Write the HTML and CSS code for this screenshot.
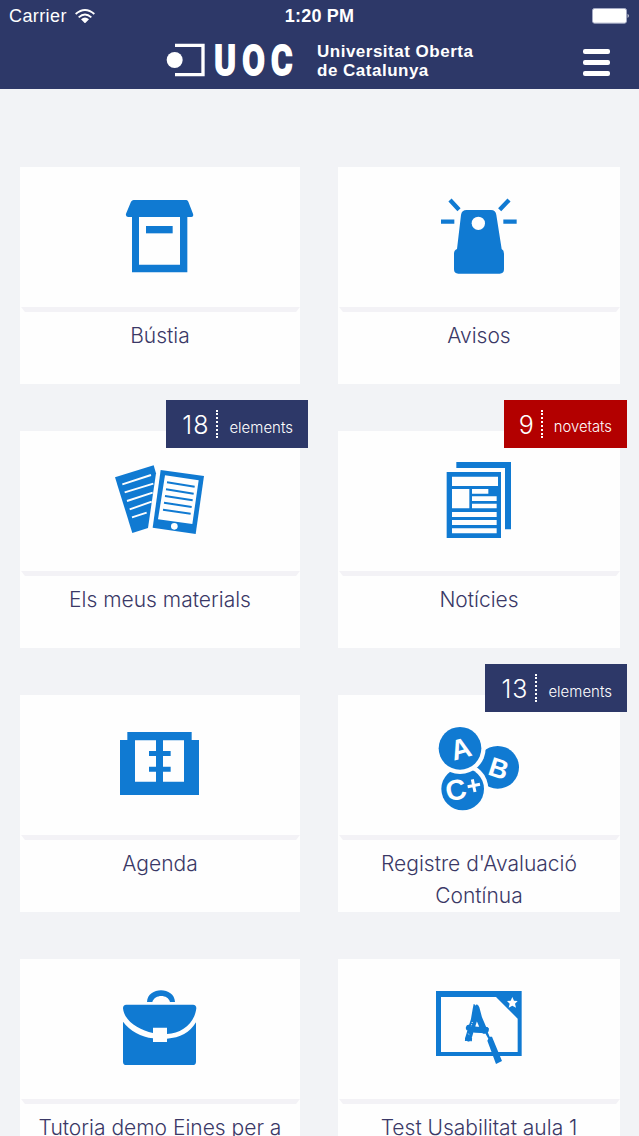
FILE: index.html
```html
<!DOCTYPE html>
<html lang="ca">
<head>
    <meta charset="UTF-8">
    <meta name="viewport" content="width=device-width, initial-scale=1.0">
    <title>UOC</title>
    <link rel="stylesheet" href="styles.css">
</head>
<body>

<header class="header">
    <div class="status-bar">
        <div class="carrier">
            <span>Carrier</span>
            <svg class="wifi" viewBox="0 0 60 42" width="20" height="14">
                <path d="M2 15 Q30 -9 58 15 M11 25 Q30 8 49 25" fill="none" stroke="#fff" stroke-width="5.5"/>
                <path d="M18 31 Q30 20 42 31 L30 43 Z" fill="#fff"/>
            </svg>
        </div>
        <div class="time">1:20 PM</div>
        <svg class="battery" viewBox="0 0 114 48" width="38" height="16">
            <rect x="1.5" y="1.5" width="102" height="44" rx="6" fill="#fff" stroke="#a4aac4" stroke-width="3"/>
            <path d="M107 17 Q113 23 107 30 Z" fill="#fff"/>
        </svg>
    </div>
    <div class="brand-bar">
        <svg class="logo" viewBox="498 96 390 168" width="130" height="56">
            <path d="M525 136 H609 V224 H525" fill="none" stroke="#fff" stroke-width="10"/>
            <circle cx="524" cy="180" r="24" fill="#fff"/>
            <text class="logo-text" transform="translate(643 224) scale(0.78 1)">UOC</text>
        </svg>
        <div class="brand-name">Universitat Oberta<br>de Catalunya</div>
        <button class="menu-btn" aria-label="Menú">
            <span></span>
            <span></span>
            <span></span>
        </button>
    </div>
</header>

<main class="cards-container">
    <div class="card">
        <svg class="card-icon" viewBox="270 36 360 420">
            <path d="M371 135 H529 Q533 135 535 140 L549 176 Q552 186 544 186 H532 V352 H366 V186 H354 Q346 186 348 176 L363 140 Q366 135 371 135 Z M387 186 V329 H510 V186 Z" fill-rule="evenodd"/>
            <path d="M408 213 H488 V235 H408 Z"/>
        </svg>
        <div class="card-line"></div>
        <div class="card-title">Bústia</div>
    </div>

    <div class="card">
        <svg class="card-icon" viewBox="267 36 360 420">
            <path d="M410 165 H483 Q497 165 499 180 L515 282 Q522 286 522 296 V343 Q522 356 509 356 H385 Q372 356 372 343 V296 Q372 286 381 282 L393 180 Q395 165 410 165 Z"/>
            <circle class="paper" cx="445" cy="205" r="20"/>
            <path class="stroke" d="M333 200 H373 M520 200 H560 M360 135 L387 164 M537 135 L509 164" stroke-width="13"/>
        </svg>
        <div class="card-line"></div>
        <div class="card-title">Avisos</div>
    </div>

    <div class="card">
        <div class="badge"><span class="badge-number">18</span><span class="badge-text">elements</span></div>
        <svg class="card-icon" viewBox="270 108 360 420">
            <path d="M315 247 L431 211 L438 235 L414 399 L367 414 Z"/>
            <path class="paper-stroke" d="M337 268 L423 240 M344 292 L430 266 M351 318 L428 293 M359 343 L425 320 M366 367 L410 353" stroke-width="6"/>
            <path d="M452 225 L582 243 L557 417 L428 398 Z"/>
            <path class="paper" d="M465 241 L566 256 L547 387 L444 373 Z"/>
            <path class="stroke" d="M471 262 L554 275 M468 283 L551 296 M465 303 L548 316 M462 323 L545 336 M459 344 L542 356" stroke-width="6"/>
            <circle class="paper" cx="493" cy="394" r="10"/>
        </svg>
        <div class="card-line"></div>
        <div class="card-title">Els meus materials</div>
    </div>

    <div class="card">
        <div class="badge badge-new"><span class="badge-number">9</span><span class="badge-text">novetats</span></div>
        <svg class="card-icon" viewBox="267 108 360 420">
            <path d="M379 201 H543 V403 H525 V219 H379 Z"/>
            <path d="M350 231 H513 V429 H350 Z"/>
            <path class="paper" d="M366 245 H504 V273 H366 Z M366 282 H418 V340 H366 Z M426 282 H475 V296 H426 Z M426 304 H500 V318 H426 Z M426 326 H500 V340 H426 Z M366 351 H500 V366 H366 Z M366 375 H500 V390 H366 Z M366 400 H500 V415 H366 Z"/>
        </svg>
        <div class="card-line"></div>
        <div class="card-title">Notícies</div>
    </div>

    <div class="card">
        <svg class="card-icon" viewBox="270 15 360 420">
            <path d="M352 126 H545 V150 H567 V315 H330 V150 H352 Z"/>
            <path class="paper" d="M375 151 H438 V183 H417 V198 H438 V230 H417 V245 H438 V275 H375 Z M459 151 H522 V275 H459 V245 H482 V230 H459 V198 H482 V183 H459 Z"/>
        </svg>
        <div class="card-line"></div>
        <div class="card-title">Agenda</div>
    </div>

    <div class="card">
        <div class="badge"><span class="badge-number">13</span><span class="badge-text">elements</span></div>
        <svg class="card-icon" viewBox="267 120 360 420">
            <circle cx="503" cy="337" r="64"/>
            <circle class="paper" cx="398" cy="402" r="77"/>
            <circle cx="398" cy="402" r="64"/>
            <circle class="paper" cx="390" cy="280" r="77"/>
            <circle cx="390" cy="280" r="64"/>
            <g class="grade">
                <text transform="translate(371 317) rotate(-16)" font-size="84">A</text>
                <text transform="translate(470 358) rotate(18)" font-size="80">B</text>
                <text transform="translate(353 440) rotate(-12)" font-size="86">C</text>
            </g>
            <path class="paper-stroke" d="M413 395 L450 388 M427 373 L435 411" stroke-width="9"/>
        </svg>
        <div class="card-line"></div>
        <div class="card-title">Registre d'Avaluació Contínua</div>
    </div>

    <div class="card">
        <svg class="card-icon" viewBox="270 27 360 420">
            <path d="M411 156 C413 109 493 109 495 156 H480 C474 132 434 132 427 156 Z"/>
            <path d="M349 164 H549 Q559 164 559 175 C554 220 515 250 471 252 V233 H429 V249 C386 240 342 212 339 175 Q339 164 349 164 Z"/>
            <path d="M339 215 C359 243 394 261 429 265 V276 H471 V266 C510 264 540 247 558 217 V335 Q558 345 548 345 H349 Q339 345 339 335 Z"/>
        </svg>
        <div class="card-line"></div>
        <div class="card-title">Tutoria demo Eines per a</div>
    </div>

    <div class="card">
        <svg class="card-icon" viewBox="267 27 360 420">
            <path d="M318 123 H575 V318 H318 Z M333 141 V306 H563 V206 L498 141 Z" fill-rule="evenodd"/>
            <path class="paper" d="M547 141 L552 152 L563 153 L555 161 L558 173 L547 167 L536 173 L539 161 L531 153 L542 152 Z"/>
            <path class="stroke" d="M438 175 L432 210 L424 235 L415 265 M439 175 L447 205 L463 242 M417 234 L437 239 L467 240" stroke-width="19" stroke-linecap="round" stroke-linejoin="round"/>
            <path class="stroke" d="M405 268 L426 269 M412 228 L421 237 M430 168 L445 169 M459 231 L475 239" stroke-width="10" stroke-dasharray="5 3"/>
            <path class="paper-stroke" d="M427 216 L423 230 M415 251 L419 257" stroke-width="3" stroke-dasharray="3 4"/>
            <path d="M460 239 L470 239 L479 260 L486 260 L516 333 L498 342 L472 272 L475 266 Z"/>
        </svg>
        <div class="card-line"></div>
        <div class="card-title">Test Usabilitat aula 1</div>
    </div>
</main>

</body>
</html>
```

FILE: styles.css
```css
* {
    box-sizing: border-box;
}
body {
    font-family: Inter, "Liberation Sans", sans-serif;
    margin: 0;
    height: 1136px;
    overflow: hidden;
    background-color: #f2f3f6;
}
.header {
    height: 89px;
    background-color: #2d3868;
    color: #fff;
}
.status-bar {
    display: grid;
    grid-template-columns: 1fr auto 1fr;
    align-items: center;
    height: 32px;
    padding: 0 9px;
    font-family: "Liberation Sans", Arial, sans-serif;
    font-size: 18px;
}
.carrier {
    display: flex;
    align-items: center;
    gap: 8px;
    letter-spacing: 0.4px;
}
.time {
    font-weight: bold;
    font-size: 18px;
    letter-spacing: 0.2px;
}
.battery {
    justify-self: end;
}
.brand-bar {
    display: flex;
    height: 57px;
    padding: 0 29px 0 166px;
}
.logo-text {
    font-family: Roboto, "Liberation Sans", sans-serif;
    font-weight: bold;
    font-size: 126px;
    letter-spacing: 24px;
    fill: #fff;
    stroke: #fff;
    stroke-width: 6px;
}
.brand-name {
    margin: 11px 0 0 21px;
    font-family: "Liberation Sans", Arial, sans-serif;
    font-weight: bold;
    font-size: 17px;
    line-height: 18.5px;
    letter-spacing: 0.5px;
}
.menu-btn {
    display: flex;
    flex-direction: column;
    gap: 6px;
    margin: 17px 0 0 auto;
    padding: 0;
    border: none;
    background: none;
    cursor: pointer;
}
.menu-btn span {
    width: 27px;
    height: 5px;
    border-radius: 2px;
    background-color: #fff;
}
.cards-container {
    display: grid;
    grid-template-columns: 280px 282px;
    gap: 47px 38px;
    padding: 78px 19px 0 20px;
}
.card {
    position: relative;
    height: 217px;
    background-color: #fefefe;
    text-align: center;
}
.card-icon {
    display: block;
    width: 120px;
    height: 140px;
    margin: 0 auto;
    fill: #107ad2;
}
.card-icon .paper {
    fill: #fefefe;
}
.card-icon .stroke {
    fill: none;
    stroke: #107ad2;
}
.card-icon .paper-stroke {
    fill: none;
    stroke: #fefefe;
}
.grade {
    font-family: "Liberation Sans", Arial, sans-serif;
    font-weight: bold;
    fill: #fefefe;
}
.card-line {
    height: 5px;
    background-color: #f3f2f6;
    clip-path: polygon(1px 0, 100% 0, calc(100% - 4px) 100%, 5px 100%);
}
.card-title {
    padding: 8px 15px 0;
    font-size: 21px;
    font-weight: 300;
    line-height: 32px;
    color: #3a3866;
}
.badge {
    position: absolute;
    top: -31px;
    right: -8px;
    display: flex;
    align-items: center;
    height: 48px;
    padding: 0 15px 0 16px;
    background-color: #2d3868;
    color: #fff;
    font-weight: 300;
}
.card:nth-child(even) .badge {
    right: -7px;
}
.badge-number {
    padding: 2px 7px 0 0;
    border-right: 2px dotted #fff;
    font-size: 25px;
    line-height: 26px;
    letter-spacing: 1px;
}
.badge-text {
    padding: 6px 0 0 11px;
    font-size: 15px;
}
.badge-new {
    padding-left: 15px;
    background-color: #b30000;
}
.badge-new .badge-number {
    padding-right: 6px;
}
.badge-new .badge-text {
    font-size: 14.8px;
}
```
